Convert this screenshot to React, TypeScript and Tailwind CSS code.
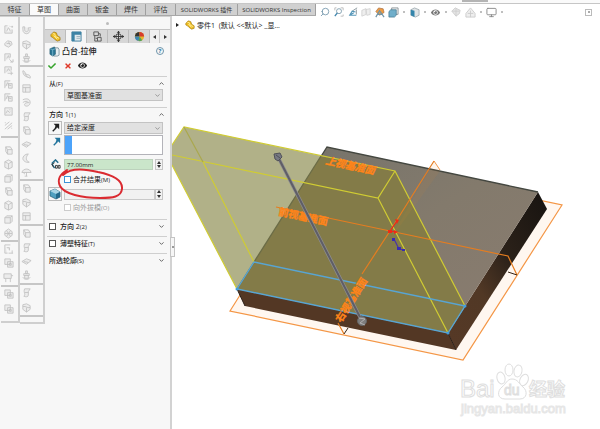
import React, { useState } from 'react';
import { FaCheck, FaTimes, FaEye } from 'react-icons/fa';
import { FiChevronDown, FiChevronUp, FiSearch, FiMonitor } from 'react-icons/fi';

const tabs = ['特征', '草图', '曲面', '钣金', '焊件', '评估'];

// little grey line drawings for the command bars, 12x12 each
const glyphs: Record<string, string> = {
  sketch: 'M2 2h3M2 2v8h8V6M7 2l1 1M4 8l2-4 2 4M10 2v2M9 3h2',
  loop: 'M2 6l3-3 4 1 1 3-4 3-4-2zM4 6h4M6 4l2 4',
  sheet: 'M2 10V2h6v4M4 7l2-3 1 3M7 8l3 3M11 8v3H8',
  frame: 'M2 9V2h7v4M4 7l2-3 2 3M5 9h6M9 7v4',
  stack: 'M2 10V2h6M3 8l2-4 2 3M6 5h4v5H6zM7 7h2',
  grid: 'M2 2h8v8H2zM2 5h8M5 5v5',
  picture: 'M2 2h8v8H2zM3 8l2-3 2 2 1-1M7 4h1',
  lines: 'M2 6l5-4M2 10l8-7M5 10l5-4M2 3h1M9 9h1',
  hook: 'M2 2v3c0 6 8 6 8 0V4M2 2h2v3c0 3 4 3 4 0V3M8 3h3',
  ball: 'M2 3l4-1 4 2v4l-4 3-4-3zM2 5c4-1 4 2 8 1M6 6v5',
  stamp: 'M5 1h2v3H5zM3 4h6v2H3zM2 8c2 3 6 3 8 0M4 6v3h4V6',
  leaf: 'M2 2c0 3 1 5 3 6l5 2c1-3-2-4-4-4L3 2zM4 5l3 4',
  curl: 'M2 3c4-2 8-1 8 3s-5 5-6 3 2-3 5-3M2 6c2-2 5-1 6 0',
  ribbon: 'M4 2h6L8 5v4c0 2-3 2-5 1 3-2-1-4 1-8zM4 6h4',
  box: 'M3 2h5l2 3v5H5L3 7zM3 2l2 3h5M5 5v5',
  plane: 'M1 6l5-3 5 2-5 4zM3 6l5 1',
  moon: 'M8 1c-4 0-6 3-6 5s3 5 7 4C5 9 5 4 8 1z',
  umbrella: 'M1 6c1-5 9-5 10 0zM6 6v4M4 10h3M3 6l1 2',
  cube: 'M2 4h6v6H2zM2 4l2-2h6L8 4M10 2v6l-2 2',
  wire: 'M2 3l4-2 4 2v6l-4 2-4-2zM2 3l4 2 4-2M6 5v6',
  globe: 'M6 1l4 3v4l-4 3-4-3V4zM2 6h8M4 3l4 6M8 3L4 9',
  corner: 'M2 1h6M2 1v9h3M4 4h3v3M6 10h5M10 7v3',
  chair: 'M1 2h8v5H1zM3 7v4M8 7v4M9 4h2',
  copy: 'M2 1h6v6H2zM5 4h6v6H5zM7 6h2v2H7z',
};

const leftBar = [
  { size: 'h-[113px] pb-1', icons: ['sketch', 'loop', 'sheet', 'frame', 'stack', 'stack', 'picture', 'lines'] },
  { size: 'h-[104px] pt-1.5', icons: ['box', 'wire', 'cube', 'box', 'wire', 'cube', 'globe'] },
  { size: 'h-[45px]', icons: ['corner', 'copy', 'chair'] },
  { size: 'h-[36px] pb-1', icons: ['copy', 'copy'] },
];

const rightBar = [
  { size: 'h-[42px]', icons: ['hook', 'ball', 'stamp'] },
  { size: 'h-[114px]', icons: ['leaf', 'grid', 'curl', 'ribbon', 'box', 'plane', 'moon', 'umbrella'] },
  { size: 'h-[45px]', icons: ['box', 'ball', 'grid'] },
  { size: 'h-[59px]', icons: ['box', 'ribbon', 'plane', 'stamp'] },
  { size: 'h-[32px]', icons: ['ribbon', 'ball'] },
  { size: 'h-[7px]', icons: [] },
];

const Glyph = ({ name }: { name: string }) => (
  <svg viewBox="0 0 12 12" className="w-[11px] h-[11px]" fill="#ececec" stroke="#c0c0c0" strokeWidth="0.9">
    <path d={glyphs[name]} />
  </svg>
);

const PartIcon = ({ className = '' }: { className?: string }) => (
  <svg viewBox="0 0 12 12" className={className}>
    <path d="M1 4l3-3 3 1 1 3 3 2v3l-3 1-3-2-2-2-2-1z" fill="#eebc20" stroke="#98700c" strokeWidth="0.7" />
    <path d="M3 3l2 0 1 3 4 2M4 5l4 4" fill="none" stroke="#fff0a0" strokeWidth="1" />
  </svg>
);

const ExtrudeIcon = ({ className = '' }: { className?: string }) => (
  <svg viewBox="0 0 12 12" className={className}>
    <path d="M5 2h5l1 2v6l-2 1H5z" fill="#e6eef1" stroke="#53717e" strokeWidth="0.7" />
    <path d="M1 3l5-2 1 3v5l-3 2-3-2z" fill="#2b7796" stroke="#1b5269" strokeWidth="0.6" />
    <path d="M1 3l3 1 3-1M4 4v7" fill="none" stroke="#94cbe0" strokeWidth="0.7" />
  </svg>
);

const DraftIcon = () => (
  <svg viewBox="0 0 12 12" className="size-[12px]">
    <path d="M1 3l5-2 5 3v5l-4 2-6-3z" fill="#4fa0c0" stroke="#235c74" strokeWidth="0.7" />
    <path d="M1 3l6 3 4-2-5-3z" fill="#a9d5e5" />
    <path d="M7 6l4-2v5l-4 2z" fill="#24698a" />
  </svg>
);

const ArrowIcon = ({ color }: { color: string }) => (
  <svg viewBox="0 0 12 12" className="w-[11px] h-[11px]">
    <path d="M3 10l4-4" stroke={color} strokeWidth="1.5" />
    <path d="M4 2h6v6L8 6 5 7l1-3z" fill={color} />
  </svg>
);

const Section = ({ title, sub, open, check, children }: {
  title: string; sub: string; open?: boolean; check?: boolean; children?: React.ReactNode;
}) => {
  const heading = <>{title}<span className="text-[6px]">({sub})</span></>;
  return (
    <section className="border-t border-[#cfcfcf] pl-0.5 pb-1">
      <div className="flex h-3 items-center gap-1 font-medium">
        {check ? (
          <label className="flex items-center gap-1">
            <input type="checkbox" className="size-[7px] appearance-none border border-[#555] bg-white" />
            <span>{heading}</span>
          </label>
        ) : <h2>{heading}</h2>}
        <button aria-label={title} className="ml-auto mr-0.5 text-[#555]">
          {open ? <FiChevronUp size={7} strokeWidth={3} /> : <FiChevronDown size={7} strokeWidth={3} />}
        </button>
      </div>
      {children}
    </section>
  );
};

const Dropdown = ({ label, value }: { label: string; value: string }) => (
  <div className="relative h-3 flex-1">
    <select aria-label={label} className="block h-3 w-full appearance-none border border-[#c3c3c3] bg-[#e1e1e1] pl-0.5 leading-none">
      <option>{value}</option>
    </select>
    <FiChevronDown size={7} className="pointer-events-none absolute right-0.5 top-[3px] text-[#666]" />
  </div>
);

const Spinner = () => (
  <div className="flex w-2 shrink-0 flex-col border border-[#c6c6c6] bg-[#f2f2f2]">
    <button aria-label="增加" className="flex flex-1 items-center justify-center">
      <svg viewBox="0 0 4 3" className="w-1 h-[3px]"><path d="M0 3l2-3 2 3z" fill="#333" /></svg>
    </button>
    <button aria-label="减少" className="flex flex-1 items-center justify-center">
      <svg viewBox="0 0 4 3" className="w-1 h-[3px]"><path d="M0 0h4L2 3z" fill="#333" /></svg>
    </button>
  </div>
);

const Header = () => (
  <header className="relative z-10 flex h-4 shrink-0 flex-col bg-[#fafafa]">
    <div className="h-1 border-b border-[#c6c6c6]">
      <div className="ml-[77%] h-0.5 w-[26px] bg-[#b4b4b4]" />
    </div>
    <div className="flex h-3">
      <nav className="flex border-b border-[#a8a8a8] text-[#333]">
        {tabs.map((tab) => (
          <button
            key={tab}
            className={`w-[29px] first:w-[30px] nth-6:w-[30px] border-r border-[#9f9f9f] ${tab === '草图' ? 'bg-[#fafafa]' : 'bg-[#d0d0d0]'}`}
          >
            {tab}
          </button>
        ))}
        <button className="w-[62px] whitespace-nowrap border-r border-[#9f9f9f] bg-[#d0d0d0] text-[6px]">SOLIDWORKS 插件</button>
        <button className="w-[78px] whitespace-nowrap border-r border-[#9f9f9f] bg-[#d0d0d0] text-[6px]">SOLIDWORKS Inspection</button>
      </nav>
      <div className="flex h-4 flex-1 items-center bg-white pl-1">
        <ViewTools />
      </div>
    </div>
  </header>
);

const Dot = () => <span className="size-0.5 rounded-full bg-[#aaa]" />;

const ViewTools = () => (
  <>
    <button aria-label="整屏显示" className="mr-1"><FiSearch size={10} className="-scale-x-100 text-[#6f93a8]" /></button>
    <button aria-label="局部放大" className="mr-1">
      <svg viewBox="0 0 12 12" className="size-[10px]" fill="none">
        <path d="M3 1H1v3M8 1h3v3M11 9v2H8" stroke="#b4b4b4" />
        <circle cx="6" cy="5" r="3" stroke="#7898a8" /><path d="M4 7l-3 4" stroke="#3f86ad" strokeWidth="1.6" />
      </svg>
    </button>
    <button aria-label="上一视图" className="mr-[3px]">
      <svg viewBox="0 0 12 12" className="size-[10px]" fill="none">
        <path d="M11 1L5 5M10 3v6" stroke="#7c8990" /><path d="M10 10H2l3-5 4 1M2 10l5-3" stroke="#5596b8" strokeWidth="1.3" />
      </svg>
    </button>
    <button aria-label="剖面" className="mr-[3px]">
      <svg viewBox="0 0 12 12" className="size-[10px]"><path d="M1 4l5-2v7l-5 2zM6 3l5-1v7l-4 1z" fill="#eee" stroke="#d0d0d0" /></svg>
    </button>
    <button aria-label="外观" className="mr-[3px]">
      <svg viewBox="0 0 12 12" className="size-[11px]">
        <path d="M2 5l3-4 5 1 1 4-5 3z" fill="#ee9c43" stroke="#a2683b" strokeWidth="0.7" />
        <path d="M2 11l4-7 5 7M4 8h5" fill="none" stroke="#7194a7" strokeWidth="1.3" />
      </svg>
    </button>
    <button aria-label="视图定向" className="mr-1">
      <svg viewBox="0 0 12 12" className="size-[11px]">
        <path d="M4 4V1h7v7H8" fill="#f4f4f4" stroke="#707b80" strokeWidth="0.8" />
        <path d="M1 5l2-2h6v6l-2 2H1z" fill="#70aeca" stroke="#447890" strokeWidth="0.8" />
      </svg>
    </button>
    <Dot />
    <button aria-label="显示样式" className="mx-1">
      <svg viewBox="0 0 12 12" className="size-[11px]">
        <path d="M2 3l4-2 5 2v6l-4 2-5-2z" fill="#e0e4e6" stroke="#87969d" strokeWidth="0.7" />
        <path d="M2 3l4 1v7L2 9z" fill="#3485ab" />
      </svg>
    </button>
    <Dot />
    <button aria-label="隐藏项目" className="mx-[5px]"><FaEye size={9} className="text-[#777]" /></button>
    <Dot />
    <button aria-label="编辑外观" className="mx-1">
      <svg viewBox="0 0 12 12" className="size-[10px]"><path d="M1 5l4-4 6 3-1 4-4 3z" fill="#e5e5e5" stroke="#ccc" /><path d="M1 5h9M6 2v9" stroke="#ccc" /></svg>
    </button>
    <button aria-label="布景" className="mr-1">
      <svg viewBox="0 0 12 12" className="size-[11px]"><path d="M1 7l5-6 5 6v4H1zM3 7h6M6 4v7" fill="#eee" stroke="#ccc" /></svg>
    </button>
    <Dot />
    <button aria-label="视图设定" className="mx-1"><FiMonitor size={11} className="text-[#888]" /></button>
    <Dot />
    <button aria-label="展开面板" className="ml-auto mr-2 flex size-[7px] items-center border border-[#bbb]">
      <span className="ml-0.5 size-0.5 bg-[#aaa]" />
    </button>
  </>
);

const CommandBar = ({ groups, width, inset }: { groups: { size: string; icons: string[] }[]; width: string; inset: string }) => (
  <div className={`${width} shrink-0 border-r-2 border-b-2 border-[#cfcfcf] pt-1.5`}>
    {groups.map((group, i) => (
      <div key={i} className={`flex flex-col items-start justify-around border-[#c6c6c6] ${inset} ${group.size} ${i ? 'border-t-2' : ''}`}>
        {group.icons.map((name, n) => (
          <button key={n} aria-label={name}><Glyph name={name} /></button>
        ))}
      </div>
    ))}
  </div>
);

const PanelTabs = () => {
  const cell = 'flex flex-1 items-center justify-center border-r border-[#bcbcbc]';
  return (
    <div className="flex h-[14px] border-t border-[#c4c4c4] bg-[#d6d6d6]">
      <button aria-label="设计树" className={cell}><PartIcon className="size-[11px]" /></button>
      <button aria-label="属性" className={`${cell} bg-[#f6f6f6]`}>
        <svg viewBox="0 0 12 12" className="size-[11px]">
          <path d="M1 1h10v10H1z" fill="#dfe9ed" stroke="#3c7e9c" />
          <path d="M1 1h10v3H1zM1 4h3v7H1z" fill="#3c83a5" /><path d="M6 6h4M6 8h4" stroke="#9cb2bc" />
        </svg>
      </button>
      <button aria-label="配置" className={cell}>
        <svg viewBox="0 0 12 12" className="size-[11px]" fill="none" stroke="#555">
          <path d="M2 1h5v4H2zM3 5v6h3M7 3h2v3M6 7h4v4H6zM4 8h2" />
        </svg>
      </button>
      <button aria-label="尺寸" className={cell}>
        <svg viewBox="0 0 12 12" className="size-[11px]" fill="none" stroke="#333">
          <circle cx="6" cy="6" r="3" /><path d="M6 0v12M0 6h12" />
          <path d="M4 2l2-2 2 2zM4 10l2 2 2-2zM2 4L0 6l2 2zM10 4l2 2-2 2z" fill="#333" stroke="none" />
        </svg>
      </button>
      <button aria-label="显示" className={cell}>
        <svg viewBox="0 0 12 12" className="size-[11px]">
          <circle cx="6" cy="6" r="5" fill="#e6b52c" />
          <path d="M6 6V1a5 5 0 0 0-5 5z" fill="#333" /><path d="M6 6V1a5 5 0 0 1 5 5z" fill="#d63b2d" />
          <path d="M6 6H1a5 5 0 0 0 4 5z" fill="#3d86b5" /><path d="M6 6l-1 5a5 5 0 0 0 4-1z" fill="#55a255" />
        </svg>
      </button>
      <button aria-label="向左" className="flex w-[10px] items-center justify-center border-r border-[#ccc] bg-[#f0f0f0]">
        <svg viewBox="0 0 3 4" className="h-1 w-[3px]"><path d="M3 0v4L0 2z" fill="#333" /></svg>
      </button>
      <button aria-label="向右" className="flex w-[10px] items-center justify-center bg-[#f0f0f0]">
        <svg viewBox="0 0 3 4" className="h-1 w-[3px]"><path d="M0 0v4l3-2z" fill="#333" /></svg>
      </button>
    </div>
  );
};

const PropertyPanel = () => {
  const [merge, setMerge] = useState(false);
  const [depth, setDepth] = useState('77.00mm');

  return (
    <aside className="relative w-[127px] shrink-0 border-r-2 border-[#d2d2d2]">
      <div className="flex h-3 items-center justify-center"><span className="size-[3px] rounded-full bg-[#bbb]" /></div>
      <PanelTabs />
      <div className="flex h-4 items-center gap-0.5 pl-1 pr-1.5">
        <ExtrudeIcon className="size-[11px]" />
        <h1 className="text-[8px] font-medium">凸台-拉伸</h1>
        <button aria-label="帮助" className="ml-auto flex size-2 items-center justify-center rounded-full border border-[#6f95ab] text-[6px] font-bold text-[#2679a8]">?</button>
      </div>
      <div className="flex h-[17px] items-center gap-[6px] pb-1 pl-[3px]">
        <button aria-label="确定"><FaCheck size={8} className="text-[#35a32b]" /></button>
        <button aria-label="取消" className="ml-0.5"><FaTimes size={8} className="text-[#df3a2a]" /></button>
        <button aria-label="预览"><FaEye size={9} className="text-[#222]" /></button>
      </div>

      <div className="mr-[3px] ml-[2px]">
        <Section title="从" sub="F" open>
          <div className="mb-0.5 flex pl-[15px] pr-1"><Dropdown label="从" value="草图基准面" /></div>
        </Section>

        <Section title="方向 1" sub="1" open>
          <div className="flex flex-col pr-1">
            <div className="flex h-[15px] items-center gap-0.5">
              <button aria-label="反向" className="-ml-px flex size-[14px] items-center justify-center border border-[#bbb]"><ArrowIcon color="#222" /></button>
              <Dropdown label="终止条件" value="给定深度" />
            </div>
            <div className="flex h-5 gap-0.5">
              <div className="w-[13px] pl-0.5 pt-px"><ArrowIcon color="#23759d" /></div>
              <div className="flex flex-1 border border-[#b3b3b9] bg-white">
                <div className="w-[7px] bg-[#4ca3fa]" />
                <input aria-label="拉伸方向" className="w-0 flex-1 outline-none" />
              </div>
            </div>
            <div className="mt-1 flex h-[11px] gap-0.5">
              <svg viewBox="0 0 12 12" className="h-[11px] w-[13px]" fill="none">
                <path d="M2 5l4-4 3 3M2 5l3 5" stroke="#246d8c" strokeWidth="1.6" />
                <path d="M5 4l-3 2 2 3M6 10h2V7H6zM9 10h2V7H9z" stroke="#333" />
              </svg>
              <input
                aria-label="深度"
                value={depth}
                onChange={(e) => setDepth(e.target.value)}
                className="w-0 flex-1 border border-[#bcd2bc] bg-[#cae6ca] pl-0.5 text-[6px]"
              />
              <Spinner />
            </div>
            <label className="mt-[3px] flex h-3 items-center gap-0.5 pl-[15px]">
              <input
                type="checkbox"
                checked={merge}
                onChange={() => setMerge(!merge)}
                className="size-[7px] appearance-none border border-[#3d93d6] bg-white"
              />
              <span>合并结果<span className="text-[6px]">(M)</span></span>
            </label>
            <div className="mt-0.5 flex h-[14px] items-center gap-0.5">
              <button aria-label="拔模开关" className="-ml-px flex size-[14px] items-center justify-center border border-[#bbb]"><DraftIcon /></button>
              <div className="flex h-[11px] flex-1">
                <input aria-label="拔模角度" disabled className="w-0 flex-1 border border-[#c9c9c9] bg-[#f1f1f1]" />
                <Spinner />
              </div>
            </div>
            <label className="mb-0.5 flex h-3 items-center gap-0.5 pl-[15px] text-[#999]">
              <input type="checkbox" disabled className="size-[7px] appearance-none border border-[#ccc] bg-white" />
              <span>向外拔模<span className="text-[6px]">(O)</span></span>
            </label>
          </div>
        </Section>

        <Section title="方向 2" sub="2" check />
        <Section title="薄壁特征" sub="T" check />
        <Section title="所选轮廓" sub="S" />
      </div>

      {/* hand-drawn mark round the merge option */}
      <svg viewBox="0 0 68 34" className="pointer-events-none absolute left-[12px] top-[150px] h-[34px] w-[68px]" fill="none">
        <path d="M10 3C3 7 0 13 3 19c4 8 22 12 40 12 13 0 21-1 22-9 1-9-9-14-24-17C29 2 14 0 6 8" stroke="#da2b31" strokeWidth="2" strokeLinecap="round" />
      </svg>

      <button aria-label="折叠面板" className="absolute left-full top-[220px] flex h-5 w-[5px] items-center justify-center border border-[#c4c4c4] bg-[#f6f6f6]">
        <span className="size-0.5 bg-[#999]" />
      </button>
    </aside>
  );
};

const Model = () => (
  <svg viewBox="172 16 428 413" className="block h-[413px] w-[428px] max-w-none">
    <defs>
      <linearGradient id="top" x1="0" y1="0" x2="1" y2="1">
        <stop offset="0" stopColor="#73726b" /><stop offset="0.5" stopColor="#837a6c" /><stop offset="1" stopColor="#8a7c70" />
      </linearGradient>
      <linearGradient id="side" x1="1" y1="0" x2="0" y2="1">
        <stop offset="0" stopColor="#171310" /><stop offset="0.4" stopColor="#2b2119" /><stop offset="0.65" stopColor="#513825" /><stop offset="1" stopColor="#563926" />
      </linearGradient>
    </defs>

    {/* base plane */}
    <path d="M247 284L230 311l233 49 99-155-233-49z" fill="#fff7f0" stroke="#f49645" strokeWidth="1.2" />
    <path d="M434 161l6 9" stroke="#f49645" fill="none" />

    {/* solid */}
    <path d="M237 289l8 17 211 44-8-17z" fill="#533724" />
    <path d="M538 192l9 17-91 141-8-17z" fill="url(#side)" />
    <path d="M237 289l90-142 211 45-90 141z" fill="url(#top)" />
    <path d="M237 289l90-142 211 45" fill="none" stroke="#444740" strokeWidth="1.3" />
    <path d="M237 289l8 17M448 333l8 17" stroke="#2c2019" />

    {/* extrusion preview */}
    <path d="M172 145l12-18 143 30-90 132-65-124z" fill="#b1b188" />
    <path d="M237 289l84-133 74 15 70 135-17 27z" fill="#837b48" />
    <path d="M434 162l-44 69-60 96M434 162l6 9-51 70" fill="#e78a2c" fillOpacity="0.08" />
    <path d="M237 289l84-133" stroke="#6b6c46" strokeWidth="1.3" />

    <g fill="none" stroke="#d0cc33" strokeWidth="1.2">
      <path d="M172 145l12-18 211 44 70 135M172 155l206 43 17-27M378 198l70 135M172 165l65 124" />
      <path d="M184 127l19 35" stroke="#aaa84d" />
      <path d="M203 162l51 100" />
    </g>
    <path d="M237 289l17-27 211 44-17 27z" fill="none" stroke="#58a5d3" strokeWidth="1.4" />
    <g fill="#439edc"><circle cx="237" cy="289" r="1.5" /><circle cx="465" cy="306" r="1.5" /><circle cx="448" cy="333" r="1.5" /></g>

    {/* front and right planes */}
    <g fill="none" stroke="#e57d20" strokeWidth="1.2">
      <path d="M276 207l114 24 118 25 9 19M434 161l-44 70-28 43M338 323l6 11" />
    </g>
    <path d="M344 334l4-6M508 272l9 3" stroke="#332214" />

    <g fill="#ff8419" stroke="#ff8419" strokeWidth="0.4" fontFamily='"Noto Sans CJK SC", sans-serif' fontSize="10" fontWeight="700">
      <text transform="translate(325 164) rotate(12)" fontStyle="italic">上视基准面</text>
      <text transform="translate(278 215) rotate(12)">前视基准面</text>
      <text transform="translate(341 323) rotate(-58)">右视基准面</text>
    </g>

    {/* drag handle */}
    <path d="M278 157l84 164" stroke="#8f8f92" strokeWidth="3.4" />
    <path d="M278 157l84 164" stroke="#5f5e66" strokeWidth="2" />
    <path d="M274 154l6-1 2 4-4 4-3-2zM276 155l4 3" fill="#777982" stroke="#505159" />
    <circle cx="362" cy="321" r="4.5" fill="#7e7e7e" stroke="#666" />
    <path d="M359 318l6 1-5 4 5 2" fill="none" stroke="#b0b0b0" />

    {/* origin */}
    <path d="M390 231l7-10M390 231l6 1" stroke="#e8261c" strokeWidth="1.2" />
    <path d="M388 230h4v3h-4zM395 219l4 1-2 4zM394 230l4 2-4 2z" fill="#f02a17" />
    <path d="M394 239l5 10 5 1" fill="none" stroke="#4a35a0" strokeWidth="1.2" />
    <path d="M392 238h3v3h-3zM397 247h4v3h-4zM402 249h3v2h-3z" fill="#382bb4" />

    {/* watermark */}
    <g fill="#fff" stroke="#dedede" strokeWidth="1" fontFamily='"Liberation Sans", sans-serif'>
      <text x="460" y="397" fontSize="24">Bai</text>
      <ellipse cx="501" cy="378" rx="4" ry="6" transform="rotate(-15 501 378)" />
      <ellipse cx="509" cy="370" rx="4" ry="6" />
      <ellipse cx="518" cy="371" rx="4" ry="6" transform="rotate(12 518 371)" />
      <ellipse cx="524" cy="380" rx="4" ry="6" transform="rotate(25 524 380)" />
      <path d="M512 379c6 0 7 5 11 8 5 4 4 12-3 12h-15c-8 0-8-8-3-12 4-3 5-8 10-8z" />
      <text x="504" y="395" fontSize="14">du</text>
      <text x="529" y="396" fontSize="18" fontWeight="700" fontFamily='"Noto Sans CJK SC", sans-serif'>经验</text>
      <text x="461" y="413" fontSize="13" stroke="#e6e6e6">jingyan.baidu.com</text>
    </g>
  </svg>
);

const App = () => (
  <div className='flex min-h-screen flex-col overflow-hidden bg-white font-["Open_Sans","Noto_Sans_CJK_SC",sans-serif] text-[7px] leading-none text-[#222]'>
    <Header />
    <div className="flex flex-1">
      <div className="flex shrink-0 border-t border-[#d0d0d0] bg-[#f7f7f7]">
        <div className="flex items-start pl-px">
          <CommandBar groups={leftBar} width="w-[19px]" inset="pl-0.5" />
          <CommandBar groups={rightBar} width="w-[25px]" inset="pl-[1px]" />
        </div>
        <PropertyPanel />
      </div>
      <main className="relative h-[413px] flex-1 overflow-hidden">
        <Model />
        <div className="absolute left-1 top-1 flex items-center">
          <svg viewBox="0 0 3 4" className="mr-1.5 h-1 w-[3px]"><path d="M0 0v4l3-2z" fill="#222" /></svg>
          <PartIcon className="mr-0.5 size-[10px]" />
          <span className="whitespace-nowrap">零件1&nbsp; (默认 &lt;&lt;默认&gt; _显...</span>
        </div>
      </main>
    </div>
  </div>
);

export default App;
